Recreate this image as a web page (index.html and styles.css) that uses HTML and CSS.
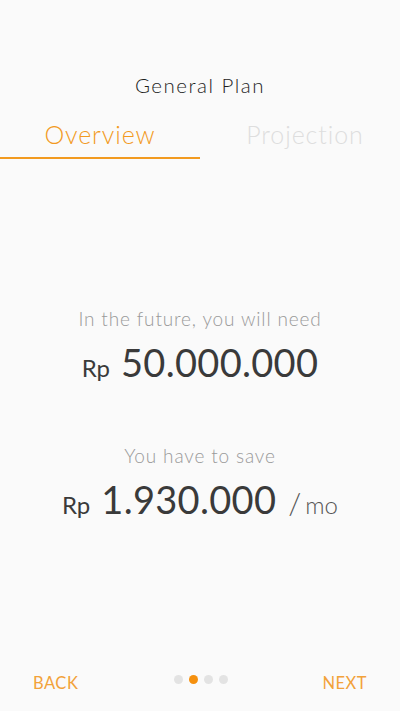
FILE: index.html
```html
<!DOCTYPE html>
<html>
<head>
<meta charset="utf-8">
<link rel="stylesheet" href="styles.css">
</head>
<body>
<div class="screen">
  <header class="header">
    <h1 class="title">General Plan</h1>
    <nav class="tabs">
      <div class="tab active">Overview</div>
      <div class="tab right">Projection</div>
    </nav>
  </header>
  <main class="content">
    <section class="block first">
      <p class="label">In the future, you will need</p>
      <p class="amount"><span class="cur">Rp</span><span class="num">50.000.000</span></p>
    </section>
    <section class="block second">
      <p class="label">You have to save</p>
      <p class="amount"><span class="cur">Rp</span><span class="num">1.930.000</span><span class="per"><span class="slash">/</span>mo</span></p>
    </section>
  </main>
  <footer class="footer">
    <span class="btn">BACK</span>
    <div class="dots"><i class="dot"></i><i class="dot on"></i><i class="dot"></i><i class="dot"></i></div>
    <span class="btn">NEXT</span>
  </footer>
</div>
</body>
</html>
```
FILE: styles.css
```css
* { box-sizing: border-box; }
html, body { margin: 0; padding: 0; overflow: hidden; }
body { background: #fafafa; font-family: Lato, "Noto Sans", sans-serif; }
.screen { width: 400px; height: 711px; display: flex; flex-direction: column; }
.header { padding-top: 71px; }
.title { margin: 0; text-align: center; font-weight: 300; font-size: 20.5px; line-height: 28px; color: #1e1e1e; letter-spacing: 1.5px; }
.tabs { display: flex; margin-top: 20px; }
.tab { width: 50%; text-align: center; font-size: 25px; font-weight: 300; line-height: 30px; padding-bottom: 8px; color: #dedede; border-bottom: 2px solid transparent; letter-spacing: 0.9px; }
.tab.active { color: #f29a1f; border-bottom-color: #f29a1f; }
.tab.right { padding-left: 10px; }
.content { flex: 1; display: flex; flex-direction: column; align-items: center; }
.block { text-align: center; }
.block.first { margin-top: 148px; }
.block.second { margin-top: 54px; }
.label { margin: 0; font-size: 19px; font-weight: 300; color: #999; line-height: 24px; letter-spacing: 0.85px; }
.amount { margin: 9px 0 0; color: #3a3a3a; display: flex; align-items: baseline; justify-content: center; line-height: 44px; }
.cur { font-size: 24px; margin-right: 11px; font-weight: 400; }
.num { font-size: 38px; font-weight: 400; letter-spacing: 0.3px; }
.per { font-size: 24px; font-weight: 300; color: #555; margin-left: 12px; }
.slash { font-size: 30px; margin-right: 4px; }
.footer { display: flex; align-items: center; justify-content: space-between; padding: 0 33px 0 33px; height: 56px; }
.btn { color: #f2a23a; font-size: 16.5px; letter-spacing: 0.5px; width: 50px; }
.btn:last-child { text-align: right; }
.dots { display: flex; gap: 6px; margin-top: -8px; margin-left: 2px; }
.dot { width: 9px; height: 9px; border-radius: 50%; background: #e3e3e3; }
.dot.on { background: #f5900f; }
```
